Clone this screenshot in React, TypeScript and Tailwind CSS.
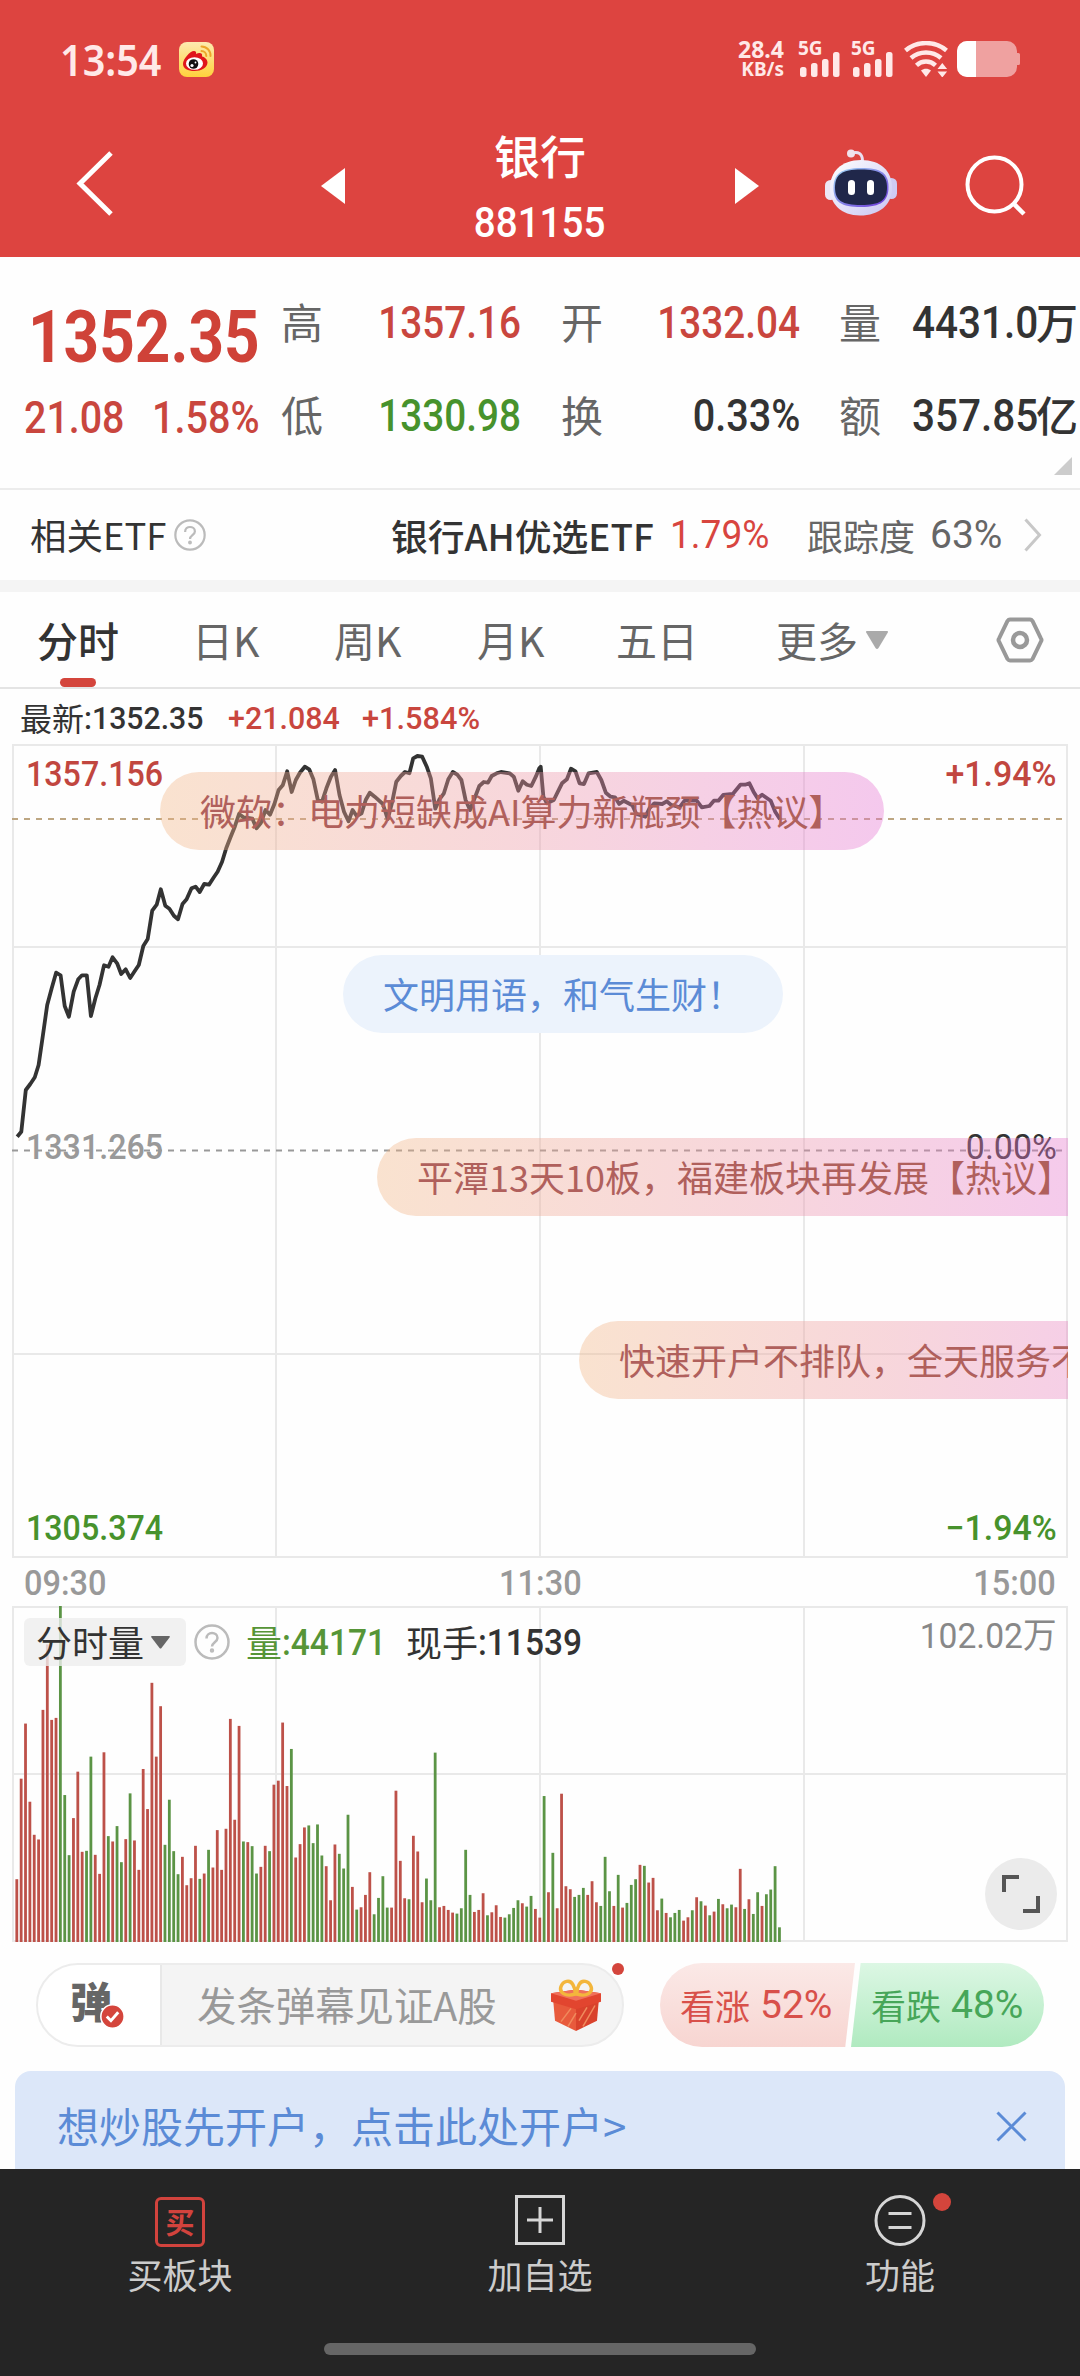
import React from 'react'
import clsx from 'clsx'

const tabs = [
  { label: '日K', width: 'w-[68px]', gap: 'ml-[75px]' },
  { label: '周K', width: 'w-[66px]', gap: 'ml-[74px]' },
  { label: '月K', width: 'w-[65px]', gap: 'ml-[77px]' },
  { label: '五日', width: 'w-[82px]', gap: 'ml-[74px]' },
  { label: '更多', width: 'w-[82px]', gap: 'ml-[78px]' },
] as const

// intraday price, plotted in chart pixels
const pricePoints: [number, number][] = [
  [5.2, 392.7], [9.3, 387.7], [13.8, 346], [18.3, 340], [22.8, 333.3], [26.6, 321],
  [30.7, 292.7], [35.2, 261], [39.7, 244.3], [44.1, 228.7], [48.6, 231.3], [52.7, 262],
  [56.9, 272.7], [61.7, 247.7], [66.2, 235.3], [70, 231.3], [74.8, 231.3], [78.9, 272],
  [83.4, 254.3], [87.5, 241], [92, 221.3], [96.5, 222.7], [100.6, 213.3], [105.1, 219.3],
  [109.2, 230], [113.7, 225.3], [118.2, 234], [122.6, 227.3], [126.8, 221], [131.3, 202],
  [135.7, 195], [140.2, 166.7], [144.7, 160.7], [148.8, 145.3], [153.3, 161.7], [157.4, 164.7],
  [161.9, 171.7], [166, 175.3], [170.5, 160], [174.6, 155.3], [179.5, 144.3], [183.6, 142.7],
  [187.7, 148], [192.2, 140], [197, 140.7], [201.5, 133.7], [205.6, 127.7], [210.1, 117.7],
  [214.2, 104.3], [218.7, 92.7], [222.8, 82.7], [227, 70], [231.5, 73.3], [235.9, 74],
  [240.4, 74.7], [244.5, 84.3], [249, 78.7], [253.5, 66], [258, 70.7], [262.4, 60],
  [266.6, 46], [270.7, 41.3], [275.2, 27.3], [279.7, 48], [283.8, 36], [287.9, 28.7],
  [292.8, 22.7], [297.2, 25.3], [301.4, 35.3], [305.8, 56], [310, 57.7], [314.4, 44.3],
  [318.9, 32.7], [323.1, 26], [327.5, 51], [332, 67.7], [336.5, 77.3], [340.6, 66],
  [344.7, 72], [349.6, 69.3], [353.7, 56], [357.8, 48.7], [362.7, 52.7], [370.9, 60],
  [375.7, 75.3], [379.9, 59.3], [384.3, 37.7], [388.8, 32], [393, 28], [397.4, 29.3],
  [401.2, 14.3], [405.4, 12], [410.2, 12.7], [415, 23.3], [418.8, 34.3], [423.3, 64.7],
  [427.4, 55.3], [431.9, 49.3], [436.3, 35.3], [440.8, 28], [445.3, 30.7], [449.4, 36],
  [453.6, 56], [458, 66], [463.2, 52.7], [467.3, 42], [471.8, 38], [476, 38.7],
  [479.7, 32], [484.6, 29.3], [489, 28], [497.6, 29.3], [501.8, 32.7], [506.3, 46.7],
  [510.7, 37.3], [514.9, 40.7], [519.3, 42], [523.8, 32.7], [527.3, 24.3], [528.7, 22.7],
  [531.4, 52.7], [534.9, 59.3], [541.8, 56], [545.9, 47.7], [550, 39.3], [554.9, 35.3],
  [559, 24.7], [563.5, 27.3], [567.6, 39.3], [572, 40], [576.6, 29.3], [584.8, 28],
  [589.3, 36], [593.8, 48.7], [598.6, 52.7], [603, 53.3], [607.2, 60], [611.7, 56.7],
  [620.3, 61.3], [624.4, 70], [633.4, 72.7], [637.5, 64.3], [642.3, 59.3], [650.2, 60],
  [654.7, 57.3], [658.9, 60.7], [667.5, 63.3], [672.6, 56.7], [684.7, 56.7], [689.8, 63.3],
  [697.4, 62], [701.9, 56.7], [706.4, 56.7], [711.2, 51], [720.8, 50], [728.4, 40.7],
  [733.2, 40.7], [737.4, 39.3], [741.5, 47.7], [745.6, 54.3], [750.1, 50.7], [758.7, 56.7],
  [763.2, 67.7], [768, 75.3],
]

// per-minute volume, negative = price fell
const volumes = [
  188, 489, 654, 420, 321, 307, 695, 891, 665, 671, -1006, -440, -260, 371, 510, 270, -273, -555,
  261, 204, 568, -317, 301, -347, -239, 308, -445, 304, 216, 518, 398, 776, 555, 706, -291, -426,
  -272, -203, 255, 170, 191, 288, -189, 205, -276, 223, 335, 216, 339, 668, 366, 647, -301, 299,
  -287, -205, 225, 288, -272, 471, 483, 657, 467, -578, 253, 293, 343, -349, -296, -352, -259, 227,
  125, 292, -264, -220, -381, 165, -97, 104, 141, 209, -83, -132, -197, -103, 103, 453, 243, 131,
  -128, 318, 271, 119, -190, -125, -567, 104, 108, 96, 88, -85, -101, -276, -141, 90, 96, 146,
  -80, 89, 110, 75, -73, -83, -102, -125, 116, -106, -138, 99, 73, -437, 149, -267, 101, 444,
  167, 158, -135, -141, -162, 141, 182, 119, -108, -255, -152, 108, -201, 103, -117, -171, -188,
  231, -228, 178, 192, 95, -130, 87, -74, -87, -96, 64, 74, -95, 134, -122, 109, -80, 91, -129,
  113, -101, -112, 104, 219, -99, 128, -84, -149, 108, -143, -157, -227, -44,
]
const MAX_VOLUME = 1006

// Digits are set a little narrower than the regular cut
const Num: React.FC<{ className?: string; children: React.ReactNode }> = ({
  className,
  children,
}) => (
  <span
    className={clsx(
      "inline-block whitespace-nowrap leading-none [font-family:Roboto,'Noto_Sans_CJK_SC',sans-serif]",
      className,
    )}
  >
    {children}
  </span>
)

const SignalBars: React.FC = () => (
  <div className="relative h-9 w-[43px] shrink-0">
    <span className="absolute left-0 top-0 text-[19px] font-bold leading-[15px] [font-family:'Noto_Sans',sans-serif]">
      5G
    </span>
    <svg className="absolute inset-0" width="43" height="36" viewBox="0 0 43 36" fill="currentColor">
      <rect x="2" y="26" width="6.5" height="10" rx="2.5" />
      <rect x="13" y="22" width="6.5" height="14" rx="2.5" />
      <rect x="24" y="18" width="6.5" height="18" rx="2.5" />
      <rect x="35" y="11" width="6.5" height="25" rx="2.5" />
    </svg>
  </div>
)

const StatusBar: React.FC = () => (
  <div className="flex h-[118px] items-center pl-[60px] pr-[59px] text-[#ffe9e8]">
    <div className="flex w-[119px] [font-family:'Noto_Sans',sans-serif]">
      <span className="origin-left scale-x-[.92] text-[43px] font-semibold leading-none">13:54</span>
    </div>
    <svg width="35" height="35" viewBox="0 0 35 35">
      <defs>
        <linearGradient id="weibo" x1="0" y1="0" x2="0" y2="1">
          <stop offset="0" stopColor="#fdeab0" />
          <stop offset="1" stopColor="#ffd23c" />
        </linearGradient>
      </defs>
      <rect width="35" height="35" rx="8" fill="url(#weibo)" />
      <path
        d="M4 22c0-5 7-13 11-13 2 0 2.500 1.500 2 3 3-1.500 7-1.500 6 2.500 3 .8 5.500 3 5.500 6C28.500 25.500 22 29 15.500 29S4 26.500 4 22z"
        fill="#e0151c"
      />
      <ellipse cx="15.500" cy="21.500" rx="8.500" ry="6.300" fill="#fff" />
      <circle cx="14.500" cy="22" r="4.800" fill="#111" />
      <circle cx="13" cy="23.500" r="1.600" fill="#fff" />
      <circle cx="16.500" cy="20.500" r=".9" fill="#fff" />
      <path
        d="M22.500 4.500a9 9 0 0 1 9 9.500M22.500 9a5 5 0 0 1 4.800 5"
        fill="none"
        stroke="#eda52a"
        strokeWidth="2"
        strokeLinecap="round"
      />
    </svg>
    <div className="ml-auto flex h-9 items-start">
      <div className="flex w-[50px] flex-col items-end leading-none [font-family:'Noto_Sans',sans-serif]">
        <span className="text-[23px] font-bold leading-[16px]">28.4</span>
        <span className="mt-1 text-[19px] font-bold leading-[17px]">KB/s</span>
      </div>
      <div className="ml-[14px] flex gap-[10px]">
        <SignalBars />
        <SignalBars />
      </div>
      <svg className="ml-[10px]" width="45" height="36" viewBox="0 0 45 36" fill="none">
        <g stroke="currentColor" strokeWidth="4.500">
          <path d="M1.500 9.500C13-.4 31-.4 42.500 9.500" />
          <path d="M7 17c8.500-7.300 21.500-7.300 30 0" />
          <path d="M12.500 24.300c5.500-5 13.500-5 19 0" />
        </g>
        <path d="M17 29.500c3-2.300 7-2.300 10 0L22 36z" fill="currentColor" />
        <path d="M33.500 28l4.800-6 4.800 6zM33.500 30.500l4.800 6 4.800-6z" fill="currentColor" />
      </svg>
      <svg className="ml-[8px]" width="64" height="36" viewBox="0 0 64 36">
        <path d="M10 0h40a10 10 0 0 1 10 10v2h1.500a1.500 1.500 0 0 1 1.500 1.500v9a1.500 1.500 0 0 1-1.500 1.500H60v2a10 10 0 0 1-10 10H10A10 10 0 0 1 0 26V10A10 10 0 0 1 10 0z" fill="#efa1a0" />
        <path d="M10 0h9v36h-9A10 10 0 0 1 0 26V10A10 10 0 0 1 10 0z" fill="#fff" />
      </svg>
    </div>
  </div>
)

const Robot: React.FC = () => (
  <svg width="72" height="67" viewBox="0 0 72 67">
    <defs>
      <linearGradient id="shell" x1="0" y1="0" x2="1" y2="1">
        <stop offset="0" stopColor="#ffffff" />
        <stop offset="1" stopColor="#c9c6f2" />
      </linearGradient>
      <linearGradient id="rim" x1="0" y1="0" x2="1" y2="1">
        <stop offset="0" stopColor="#9fd8f5" />
        <stop offset="1" stopColor="#6b35d8" />
      </linearGradient>
    </defs>
    <path d="M27 4c6-1.500 10.500 0 10.500 8" fill="none" stroke="#eadff0" strokeWidth="3" />
    <circle cx="26" cy="4.500" r="4" fill="#f1e2ec" />
    <rect x="0" y="31" width="11" height="20" rx="5.500" fill="#ece6f5" />
    <rect x="61" y="29" width="11" height="21" rx="5.500" fill="#cfcbf3" />
    <path d="M36 11c20 0 31 11 31 28S54 66.500 35 66.500 5 55 5 39s11-28 31-28z" fill="url(#shell)" />
    <path d="M36 19c20 0 27.500 5 27.500 19S56 58 36 58 8.500 53 8.500 39 16 19 36 19z" fill="url(#rim)" />
    <path d="M36 20.500c19 0 26 5 26 18S55 56 36 56 10 51.500 10 38.500s7-18 26-18z" fill="#20274a" />
    <rect x="23" y="31" width="7" height="15" rx="3.500" fill="#fff" />
    <rect x="42" y="31" width="7" height="15" rx="3.500" fill="#fff" />
  </svg>
)

const TitleBar: React.FC = () => (
  <div className="flex h-[139px] items-start pt-[16px] text-white">
    <svg className="ml-[75px] mt-[16px]" width="40" height="67" viewBox="0 0 40 67" fill="none">
      <path d="M36 3L5 33.500L36 64" stroke="#fff" strokeWidth="5" />
    </svg>
    <svg className="ml-[206px] mt-[34px]" width="24" height="36" viewBox="0 0 24 36">
      <path d="M24 0v36L0 18z" fill="#fff" />
    </svg>
    <div className="flex w-[390px] flex-col items-center">
      <span className="mt-[-4px] text-[46px] font-medium leading-[48px]">银行</span>
      <Num className="mt-[24px] scale-x-[.92] text-[42px] font-medium">881155</Num>
    </div>
    <svg className="mt-[34px]" width="24" height="36" viewBox="0 0 24 36">
      <path d="M0 0v36l24-18z" fill="#fff" />
    </svg>
    <div className="ml-[66px] mt-[15px]">
      <Robot />
    </div>
    <svg className="ml-[68px] mt-[21px]" width="62" height="62" viewBox="0 0 62 62" fill="none">
      <circle cx="29.500" cy="29.500" r="27" stroke="#fff" strokeWidth="4" />
      <path d="M48 48l11 11" stroke="#fff" strokeWidth="4.500" />
    </svg>
  </div>
)

const QuotePanel: React.FC = () => (
  <section className="relative flex h-[231px] overflow-hidden pt-[43px] text-[45px]">
    <div className="w-[281px]">
      <div className="flex h-[74px] items-center pl-[28px] text-[#cf4238]">
        <Num className="origin-left scale-x-[.85] text-[73px] font-bold">1352.35</Num>
      </div>
      <div className="mt-[23px] flex h-[40px] items-center pl-[24px] text-[#c9463e]">
        <Num className="w-[128px] origin-left scale-x-[.875] text-[45px] font-medium">21.08</Num>
        <Num className="origin-left scale-x-[.88] text-[45px] font-medium">1.58%</Num>
      </div>
    </div>
    <div className="grid w-[799px] grid-cols-[240px_40px_239px_39px_241px] content-start gap-y-[53px] pt-[1px] text-[#666]">
      <div className="flex h-10 items-center justify-between text-[42px]">
        高<Num className="origin-right scale-x-[.86] pt-[2px] text-[45px] font-medium text-[#c9463e]">1357.16</Num>
      </div>
      <span />
      <div className="flex h-10 items-center justify-between text-[42px]">
        开<Num className="origin-right scale-x-[.86] pt-[2px] text-[45px] font-medium text-[#c9463e]">1332.04</Num>
      </div>
      <span />
      <div className="flex h-10 items-center text-[42px]">
        量
        <Num className="ml-[31px] w-[124px] origin-left scale-x-[.9] pt-[2px] text-[45px] font-medium text-[#333]">4431.0</Num>
        <span className="font-medium text-[#333]">万</span>
      </div>
      <div className="flex h-10 items-center justify-between text-[42px]">
        低<Num className="origin-right scale-x-[.86] pt-[2px] text-[45px] font-medium text-[#47922c]">1330.98</Num>
      </div>
      <span />
      <div className="flex h-10 items-center justify-between text-[42px]">
        换<Num className="origin-right scale-x-[.88] pt-[2px] text-[45px] font-medium text-[#333]">0.33%</Num>
      </div>
      <span />
      <div className="flex h-10 items-center text-[42px]">
        额
        <Num className="ml-[31px] w-[124px] origin-left scale-x-[.9] pt-[2px] text-[45px] font-medium text-[#333]">357.85</Num>
        <span className="font-medium text-[#333]">亿</span>
      </div>
    </div>
    <svg className="absolute bottom-[13px] right-[8px]" width="18" height="18" viewBox="0 0 18 18">
      <path d="M18 0v18H0z" fill="#ccc" />
    </svg>
  </section>
)

const HelpIcon: React.FC<{ size: number; className?: string }> = ({ size, className }) => (
  <svg className={className} width={size} height={size} viewBox="0 0 36 36" fill="none" stroke="#bbb">
    <circle cx="18" cy="18" r="16.500" strokeWidth="2.500" />
    <path d="M12.500 14.500c0-7.500 11-7 11-.5 0 4-5.500 4.500-5.500 8.500" strokeWidth="2.500" />
    <circle cx="18" cy="26.500" r="1.200" strokeWidth="2" />
  </svg>
)

const EtfRow: React.FC = () => (
  <section className="flex h-[92px] items-center border-t-2 border-[#ececec] text-[36px] text-[#333]">
    <span className="ml-[30px] w-[144px] whitespace-nowrap text-[36.5px]">相关ETF</span>
    <HelpIcon size={32} />
    <span className="ml-[185px] w-[279px] whitespace-nowrap text-[36.8px] font-medium">银行AH优选ETF</span>
    <Num className="w-[137px] origin-left scale-x-[.95] text-[39px] text-[#d8453f]">1.79%</Num>
    <span className="w-[123px]  text-[#666]">跟踪度</span>
    <Num className="w-[94px] origin-left text-[39px] text-[#666]">63%</Num>
    <svg width="18" height="34" viewBox="0 0 18 34" fill="none">
      <path d="M1.500 1.500L15.500 17L1.500 32.500" stroke="#c8c8c8" strokeWidth="3" />
    </svg>
  </section>
)

const PeriodTabs: React.FC = () => (
  <nav className="flex h-[97px] items-center border-b-2 border-[#e4e4e4] text-[41px] text-[#666]">
    <div className="relative ml-[37px] flex h-full w-[80px] items-center whitespace-nowrap font-medium text-[#333]">
      分时
      <span className="absolute bottom-0 left-[23px] h-[9px] w-9 rounded-[5px] bg-[#d4453c]" />
    </div>
    {tabs.map((tab) => (
      <div key={tab.label} className={clsx('whitespace-nowrap', tab.width, tab.gap)}>
        {tab.label}
      </div>
    ))}
    <svg className="ml-[8px]" width="22" height="18" viewBox="0 0 22 18">
      <path d="M1 0h20q1.500 0 .8 1.500L12.500 17q-1.500 1.800-3 0L.2 1.500Q-.5 0 1 0z" fill="#aaa" />
    </svg>
    <svg className="ml-[108px]" width="48" height="46" viewBox="0 0 48 46" fill="none" stroke="#999" strokeWidth="4">
      <path d="M14 2.500h20q1.500 0 2.500 1.500L45 21.500q1 1.500 0 3L36.500 42q-1 1.500-2.500 1.500H14q-1.500 0-2.500-1.500L3 24.500q-1-1.500 0-3L11.500 4q1-1.500 2.500-1.500z" />
      <circle cx="24" cy="23" r="7" strokeWidth="4.500" />
    </svg>
  </nav>
)

const Danmaku: React.FC<{ className: string; tone?: 'warm' | 'blue'; children: string }> = ({
  className,
  tone = 'warm',
  children,
}) => (
  <div
    className={clsx(
      'absolute flex h-[78px] items-center whitespace-nowrap rounded-full px-10 pb-[3px] text-[36px]',
      tone === 'warm'
        ? 'bg-linear-to-r from-[#f2b583]/38 via-[#ed96a3]/38 to-[#e571d2]/38 text-[#b0605c]'
        : 'bg-[#ecf3fc] text-[#5b8bd6]',
      className,
    )}
  >
    {children}
  </div>
)

const PriceChart: React.FC = () => (
  <div className="relative mx-3 h-[814px] overflow-hidden">
    <svg className="absolute inset-0" width="1056" height="814" viewBox="0 0 1056 814" fill="none">
      <g stroke="#e9e9e9" strokeWidth="2">
        <path d="M0 1h1056M0 813h1056M1 0v814M1055 0v814M264 0v814M528 0v814M792 0v814M0 203h1056M0 610h1056" />
      </g>
      <path d="M0 75h1056" stroke="#bda682" strokeWidth="2" strokeDasharray="6 6" />
      <path d="M0 406.500h1056" stroke="#999" strokeWidth="2" strokeDasharray="6 6" />
      <polyline
        points={pricePoints.map((p) => p.join(',')).join(' ')}
        stroke="#333"
        strokeWidth="3.800"
        strokeLinejoin="round"
      />
    </svg>
    <Num className="absolute left-[14px] top-[13px] origin-left scale-x-[.92] text-[35px] font-medium text-[#c1463f]">1357.156</Num>
    <Num className="absolute right-[11px] top-[13px] origin-right scale-x-[.97] text-[35px] font-medium text-[#c1463f]">+1.94%</Num>
    <Num className="absolute left-[14px] top-[386px] origin-left scale-x-[.92] text-[35px] font-medium text-[#999]">1331.265</Num>
    <Num className="absolute right-[11px] top-[386px] origin-right scale-x-[.97] text-[35px] text-[#333]">0.00%</Num>
    <Num className="absolute bottom-[12px] left-[14px] origin-left scale-x-[.92] text-[35px] font-medium text-[#47922c]">1305.374</Num>
    <Num className="absolute bottom-[12px] right-[11px] origin-right scale-x-[.97] text-[35px] font-medium text-[#47922c]">−1.94%</Num>
    <Danmaku className="left-[148px] top-[28px]">微软：电力短缺成AI算力新瓶颈【热议】</Danmaku>
    <Danmaku className="left-[331px] top-[211px]" tone="blue">文明用语，和气生财！</Danmaku>
    <Danmaku className="left-[365px] top-[394px]">平潭13天10板，福建板块再发展【热议】</Danmaku>
    <Danmaku className="left-[567px] top-[577px]">快速开户不排队，全天服务不打烊</Danmaku>
  </div>
)

const VolumeChart: React.FC = () => (
  <div className="relative mx-3 h-[336px]">
    <svg className="absolute inset-0" width="1056" height="336" viewBox="0 0 1056 336" fill="none">
      <path
        d="M0 1h1056M0 335h1056M1 0v336M1055 0v336M264 0v336M528 0v336M792 0v336M0 168h1056"
        stroke="#e9e9e9"
        strokeWidth="2"
      />
      {volumes.map((v, i) => {
        const h = (Math.abs(v) / MAX_VOLUME) * 336
        return (
          <rect
            key={i}
            x={3.4 + i * 4.358}
            y={336 - h}
            width="2.8"
            height={h}
            fill={v < 0 ? '#5b9445' : '#bd5149'}
          />
        )
      })}
    </svg>
    <div className="relative flex h-[72px] items-center pl-3 text-[36px]">
      <div className="flex h-12 w-[162px] items-center rounded-md bg-[#ededed]/80 pl-[12px] text-[#333]">
        <span className="mt-[-3px]">分时量</span>
        <svg className="ml-[7px]" width="19" height="13" viewBox="0 0 19 13">
          <path d="M1 0h17q1.500 0 .5 1.500L10.500 12q-1 1-2 0L.5 1.500Q-.5 0 1 0z" fill="#666" />
        </svg>
      </div>
      <HelpIcon size={36} className="ml-[8px]" />
      <div className="ml-[16px] flex w-[160px] items-center text-[#569537]">
        <span className="mt-[-3px]">量</span>
        <Num className="origin-left scale-x-[.93] pt-[2px] text-[36px] font-medium">:44171</Num>
      </div>
      <div className="flex items-center text-[#333]">
        <span className="mt-[-3px]">现手</span>
        <Num className="origin-left scale-x-[.93] pt-[2px] text-[36px] font-medium">:11539</Num>
      </div>
      <Num className="absolute right-[11px] top-[13px] origin-right scale-x-[.96] text-[35px] text-[#888]">102.02万</Num>
    </div>
    <div className="absolute bottom-[12px] right-[11px] flex size-[72px] items-center justify-center rounded-full bg-[#ebebeb]">
      <svg width="40" height="40" viewBox="0 0 40 40" fill="none" stroke="#555" strokeWidth="4">
        <path d="M3 18V3h15M37 22v15H22" />
      </svg>
    </div>
  </div>
)

const Gift: React.FC = () => (
  <svg width="50" height="53" viewBox="0 0 50 56" preserveAspectRatio="none">
    <path d="M2 20l23 8v27L4 44z" fill="#e85a3c" />
    <path d="M48 20l-23 8v27l21-11z" fill="#d9422c" />
    <path d="M0 15l25-4 25 4v9l-25 8L0 24z" fill="#e2452f" />
    <path d="M0 15l25-4 25 4-25 8z" fill="#f0705a" />
    <path d="M10 45l10-14M17 50l8-14M32 50l12-22M28 44l8-14" stroke="#f08a5c" strokeWidth="1.500" />
    <g fill="none" stroke="#f3b63c" strokeWidth="3.500">
      <path d="M24 16C14 19 8 14 10 8s9-8 12-2 2 8 2 10z" />
      <path d="M26 16c10 3 16-2 14-8s-9-8-12-2-2 8-2 10z" />
    </g>
  </svg>
)

const DanmakuInput: React.FC = () => (
  <div className="flex h-[129px] items-start pl-[36px] pt-[21px]">
    <div className="relative flex h-[84px] w-[588px] items-center rounded-full border-2 border-[#ececec] bg-[#f4f4f4]">
      <div className="flex h-full w-[124px] items-center rounded-l-full border-r-2 border-[#e8e8e8] bg-white pl-[32px]">
        <div className="relative mt-[-10px] text-[42px] font-black leading-none text-[#666]">
          弹
          <svg className="absolute left-[30px] top-[25px]" width="25" height="25" viewBox="0 0 24 24">
            <circle cx="12" cy="12" r="11.200" fill="#d4453c" stroke="#fff" strokeWidth="1.500" />
            <path d="M6.500 12l4 4 7-8" fill="none" stroke="#fff" strokeWidth="2.800" />
          </svg>
        </div>
      </div>
      <span className="ml-[35px] mt-[-2px] w-[354px] whitespace-nowrap text-[39.4px] text-[#999]">发条弹幕见证A股</span>
      <Gift />
      <span className="absolute right-[-2px] top-[-2px] size-[12px] rounded-full bg-[#d4453c]" />
    </div>
    <div className="ml-[36px] flex h-[84px] w-[384px] overflow-hidden rounded-full text-[35px]">
      <div className="mr-[-4px] flex w-[195px] items-center bg-linear-to-b from-[#fbe9e7] to-[#f7d5d1] pl-5 text-[#d8504a] [clip-path:polygon(0_0,100%_0,95%_100%,0_100%)]">
        <span className="mt-[-2px]">看涨</span>
        <Num className="ml-[10px] origin-left text-[39px]">52%</Num>
      </div>
      <div className="flex w-[193px] items-center bg-linear-to-b from-[#dcf7e4] to-[#b0eac0] pl-[20px] text-[#47a659] [clip-path:polygon(5%_0,100%_0,100%_100%,0_100%)]">
        <span className="mt-[-2px]">看跌</span>
        <Num className="ml-[10px] origin-left text-[39px]">48%</Num>
      </div>
    </div>
  </div>
)

const BottomBar: React.FC = () => (
  <footer className="h-[207px] bg-[#252525] text-[35px] text-[#ccc]">
    <div className="grid h-[174px] grid-cols-3 pt-[26px]">
      <div className="flex flex-col items-center">
        <div className="mt-0.5 flex size-[50px] items-center justify-center rounded-[6px] border-[3px] border-[#d2433d] text-[29px] font-bold leading-none text-[#d2433d]">
          <span className="mt-[-2px]">买</span>
        </div>
        <span className="mt-px leading-[52px]">买板块</span>
      </div>
      <div className="flex flex-col items-center">
        <svg width="50" height="50" viewBox="0 0 50 50" fill="none" stroke="#d6d6d6" strokeWidth="3">
          <path d="M1.500 1.500h47v47h-47zM25 12v26M12 25h26" />
        </svg>
        <span className="mt-[3px] leading-[52px]">加自选</span>
      </div>
      <div className="relative flex flex-col items-center">
        <svg width="52" height="52" viewBox="0 0 52 52" fill="none" stroke="#d6d6d6" strokeWidth="3">
          <circle cx="26" cy="25.500" r="24" />
          <path d="M14.500 18.500h23M14.500 32.500h23" />
        </svg>
        <span className="mt-px leading-[52px]">功能</span>
        <span className="absolute left-[213px] top-[-2px] size-[18px] rounded-full bg-[#d4453c]" />
      </div>
    </div>
    <div className="mx-auto h-3 w-[432px] rounded-full bg-[#666]" />
  </footer>
)

export default function App() {
  return (
    <main className="flex h-[2376px] w-[1080px] flex-col overflow-hidden bg-[#fefefe] leading-none [font-family:'Noto_Sans_CJK_SC',sans-serif]">
      <header className="bg-[#dd4440]">
        <StatusBar />
        <TitleBar />
      </header>
      <QuotePanel />
      <EtfRow />
      <div className="h-[12px] bg-[#f4f4f4]" />
      <PeriodTabs />
      <div className="flex h-[55px] items-center pl-[20px] pt-[3px] text-[32px] text-[#333]">
        <span className="mt-[-2px]">最新</span>
        <Num className="w-[144px] origin-left scale-x-[.945] text-[32px] font-medium">:1352.35</Num>
        <Num className="w-[134px] origin-left scale-x-[.95] text-[32px] font-medium text-[#c9463e]">+21.084</Num>
        <Num className="origin-left scale-x-[.96] text-[32px] font-medium text-[#c9463e]">+1.584%</Num>
      </div>
      <PriceChart />
      <div className="flex h-[48px] items-center justify-between px-[24px] pt-[2px] text-[35px] text-[#999]">
        <Num className="origin-left scale-x-[.93] font-medium">09:30</Num>
        <Num className="scale-x-[.93] font-medium">11:30</Num>
        <Num className="origin-right scale-x-[.93] font-medium">15:00</Num>
      </div>
      <VolumeChart />
      <DanmakuInput />
      <div className="mx-[15px] flex h-[98px] items-center justify-between rounded-t-[16px] bg-[#dce7f9] pl-[42px] pr-[38px] pt-[12px] text-[42px] text-[#5b8bd6]">
        <span className="mt-[-3px]">想炒股先开户，点击此处开户&gt;</span>
        <svg width="31" height="31" viewBox="0 0 31 31" fill="none">
          <path d="M1.500 1.500l28 28M29.500 1.500l-28 28" stroke="#5b8bd6" strokeWidth="3" />
        </svg>
      </div>
      <BottomBar />
    </main>
  )
}
